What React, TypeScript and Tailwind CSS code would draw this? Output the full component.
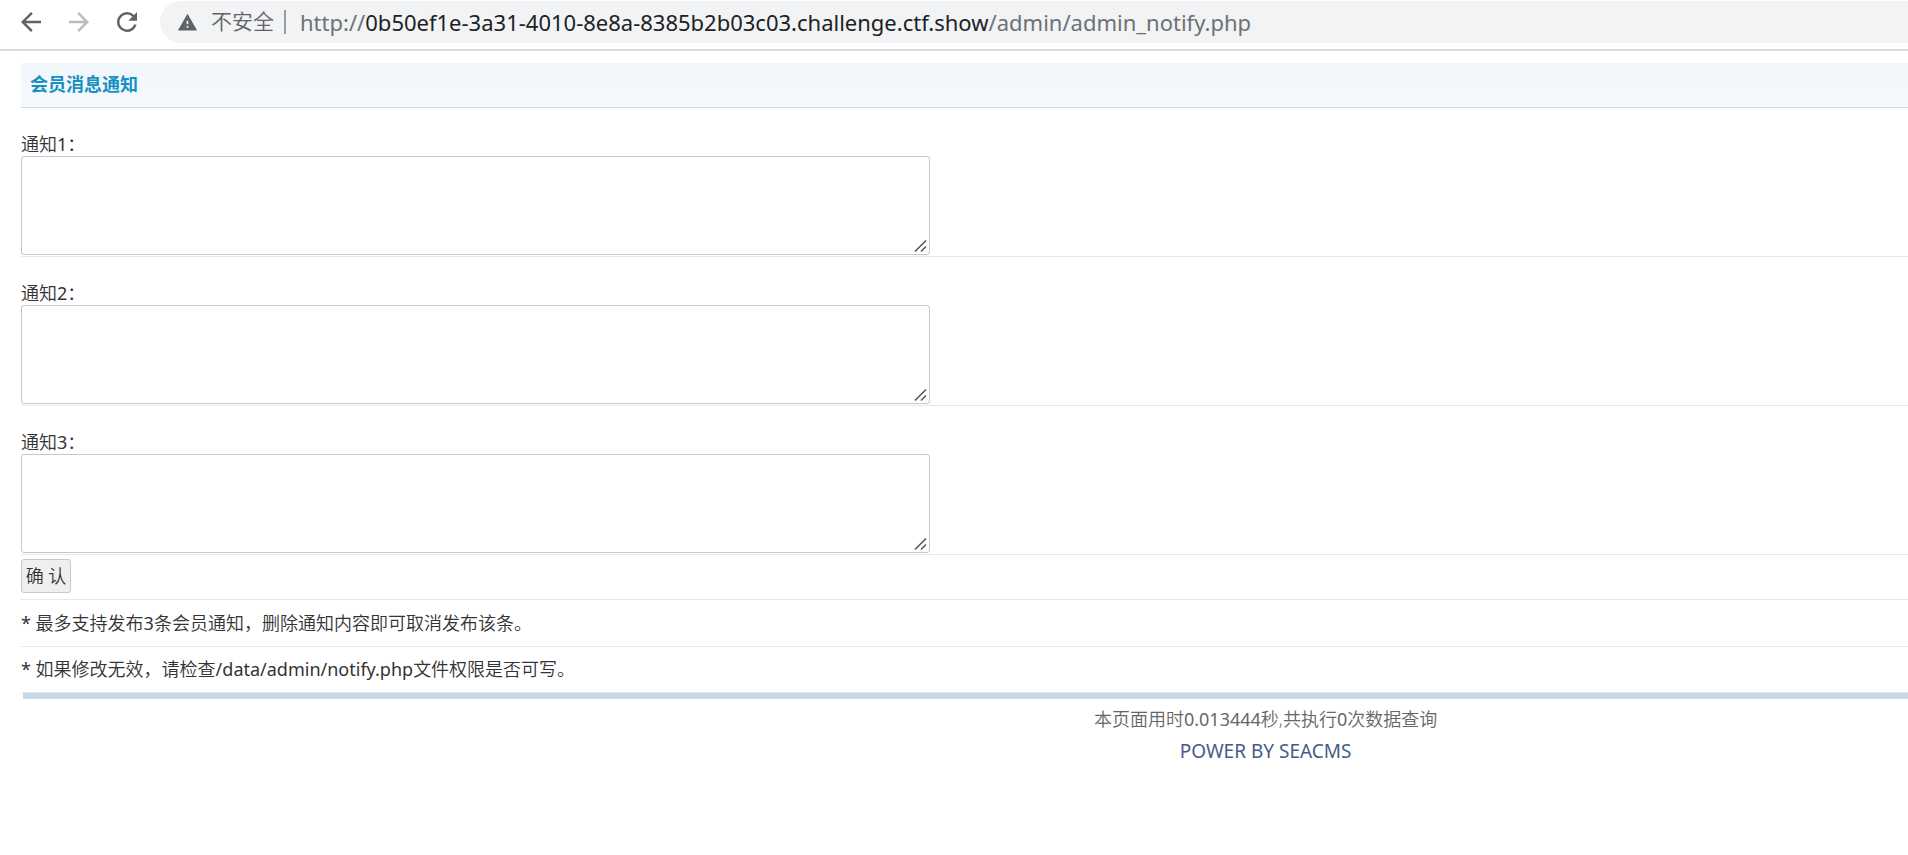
const notices = [1, 2, 3];

function NavButton({ label, path, className }: { label: string; path: string; className: string }) {
  return (
    <button type="button" aria-label={label} className={className}>
      <svg viewBox="0 0 24 24" className="size-[30px]" fill="currentColor" aria-hidden="true">
        <path d={path} />
      </svg>
    </button>
  );
}

function BrowserBar() {
  return (
    <header className="flex items-center gap-[18px] border-b-2 border-[#dadbdd] bg-white pt-px pb-[6px] pl-4">
      <NavButton
        label="后退"
        className="text-[#5f6368]"
        path="M20 11H7.83l5.59-5.59L12 4l-8 8 8 8 1.41-1.41L7.83 13H20v-2z"
      />
      <NavButton
        label="前进"
        className="text-[#babcbe]"
        path="M12 4l-1.41 1.41L16.17 11H4v2h12.17l-5.58 5.59L12 20l8-8z"
      />
      <NavButton
        label="重新加载"
        className="text-[#5f6368]"
        path="M17.65 6.35A7.96 7.96 0 0 0 12 4a8 8 0 1 0 7.73 10h-2.08A6 6 0 1 1 12 6c1.66 0 3.14.69 4.22 1.78L13 11h7V4l-2.35 2.35z"
      />
      <div className="flex h-[42px] min-w-0 flex-1 items-center overflow-hidden rounded-l-full bg-[#f1f3f4] pl-[17px] text-[21px] whitespace-nowrap text-[#5f6368]">
        <svg viewBox="0 0 24 24" className="size-[21px] shrink-0" fill="currentColor" aria-hidden="true">
          <path d="M1 21h22L12 2 1 21zm12-3h-2v-2h2v2zm0-4h-2v-4h2v4z" />
        </svg>
        <span className="ml-[13px] font-[350]">不安全</span>
        <span className="mr-[14px] ml-[10px] h-6 w-[2px] bg-[#9a9da1]" />
        <span className="text-[22px] text-[#6e7175]">
          http://
          <span className="text-[#202124]">0b50ef1e-3a31-4010-8e8a-8385b2b03c03.challenge.ctf.show</span>
          /admin/admin_notify.php
        </span>
      </div>
    </header>
  );
}

function NoticeField({ index }: { index: number }) {
  const id = `notify${index}`;
  return (
    <div className="border-b border-[#e0eaf0] pt-[26px] pb-px">
      <label htmlFor={id} className="block pb-px leading-[21px]">
        通知<span className="font-normal">{index}</span>：
      </label>
      <div className="relative w-[909px] max-w-full">
        <textarea
          id={id}
          name={id}
          className="block h-[99px] w-full resize-none rounded-[3px] border border-[#c5c8ca] bg-white p-1 outline-none"
        />
        <svg
          viewBox="0 0 14 14"
          className="pointer-events-none absolute right-[2px] bottom-[2px] size-[14px]"
          stroke="#5a5a5a"
          strokeWidth="1.6"
          aria-hidden="true"
        >
          <path d="M1 12.5 12 1.5M7 12.5 12 7.5" />
        </svg>
      </div>
    </div>
  );
}

export default function App() {
  return (
    <div className="min-h-screen overflow-x-hidden bg-white font-['Noto_Sans','Noto_Sans_CJK_SC',sans-serif] text-[18px] text-[#333333]">
      <BrowserBar />
      <main className="pt-3 pl-[21px]">
        <h1 className="border-b border-[#c6dbe2] bg-linear-to-b from-[#f1f6fb] to-[#f6fafd] px-[9px] pt-[7px] pb-[9px] leading-7 font-bold text-[#1791c3]">
          会员消息通知
        </h1>
        <form onSubmit={(event) => event.preventDefault()} className="font-[350]">
          {notices.map((index) => (
            <NoticeField key={index} index={index} />
          ))}
          <div className="border-b border-[#e0eaf0] pt-1 pb-[6px]">
            <button
              type="submit"
              className="block h-[34px] w-[50px] rounded-[3px] border border-[#c5c8ca] bg-[#efefef] whitespace-nowrap"
            >
              确 认
            </button>
          </div>
        </form>
        <p className="border-b border-[#e0eaf0] py-[9px] leading-7 font-[350]">
          <span className="font-normal">*</span> 最多支持发布<span className="font-normal">3</span>
          条会员通知，删除通知内容即可取消发布该条。
        </p>
        <p className="border-b border-[#e0eaf0] pt-2 pb-[9px] leading-7 font-[350]">
          <span className="font-normal">*</span> 如果修改无效，请检查
          <span className="font-normal">/data/admin/notify.php</span>文件权限是否可写。
        </p>
        <footer className="ml-[2px] border-t-[6px] border-[#c7d9e6] pt-1">
          <div className="w-[132%] pr-[3px] text-center leading-8 font-[350] text-[#666666]">
            <p>
              本页面用时<span className="font-normal">0.013444</span>秒,共执行
              <span className="font-normal">0</span>次数据查询
            </p>
            <p>
              <a href="#" className="text-[19px] font-normal text-[#465b85]">
                POWER BY SEACMS
              </a>
            </p>
          </div>
        </footer>
      </main>
    </div>
  );
}
